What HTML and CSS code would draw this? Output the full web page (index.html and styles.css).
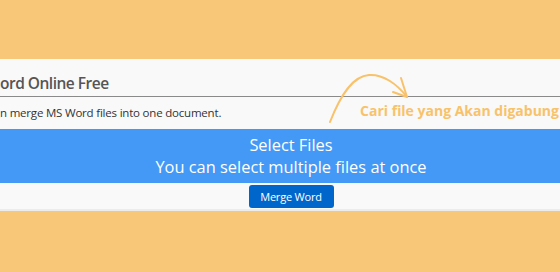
FILE: index.html
```html
<!DOCTYPE html>
<html>
<head>
<meta charset="utf-8">
<link rel="stylesheet" href="styles.css">
</head>
<body>
<div class="page">
  <div class="top-space"></div>
  <section class="panel">
    <h1 class="title">ord Online Free</h1>
    <p class="desc">n merge MS Word files into one document.</p>
    <div class="drop">
      <div class="drop-line">Select Files</div>
      <div class="drop-line">You can select multiple files at once</div>
    </div>
    <div class="actions">
      <button class="btn">Merge Word</button>
    </div>
  </section>
  <div class="bottom-space"></div>
  <div class="note">
    <svg class="arrow" width="90" height="60" viewBox="0 0 90 60">
      <path d="M3 58 C 14 30, 26 12, 42 11 C 56 10, 70 20, 80 33" fill="none" stroke="#f8c26a" stroke-width="2" stroke-linecap="round"/>
      <path d="M74 14 L 80 33 L 66 28" fill="none" stroke="#f8c26a" stroke-width="2" stroke-linecap="round" stroke-linejoin="round"/>
    </svg>
    <span class="note-text">Cari file yang Akan digabung</span>
  </div>
</div>
</body>
</html>
```
FILE: styles.css
```css
html, body {
  margin: 0;
  padding: 0;
}
body {
  background: #f8c778;
  font-family: "Open Sans", "Noto Sans", sans-serif;
  overflow: hidden;
}
.page {
  position: relative;
  width: 560px;
  height: 272px;
}
.top-space {
  height: 59px;
}
.panel {
  background: #f9f9f9;
  border-bottom: 2px solid #ececec;
  height: 150px;
  display: flex;
  flex-direction: column;
}
.title {
  margin: 0;
  height: 38px;
  box-sizing: border-box;
  padding-top: 13px;
  font-size: 15.5px;
  font-weight: 600;
  color: #555;
  line-height: 22px;
  border-bottom: 1px solid #8a8a8a;
  letter-spacing: -0.5px;
}
.desc {
  margin: 0;
  height: 32px;
  font-size: 11.5px;
  line-height: 32px;
  color: #333;
  letter-spacing: -0.2px;
}
.drop {
  background: #4399f5;
  color: #fff;
  height: 54px;
  padding-left: 22px;
  display: flex;
  flex-direction: column;
  align-items: center;
  justify-content: center;
  font-size: 16.4px;
  line-height: 22px;
}
.actions {
  display: flex;
  justify-content: center;
  padding-top: 2px;
  padding-left: 22px;
}
.btn {
  width: 85px;
  height: 23px;
  background: #0066cc;
  color: #fff;
  border: 0;
  border-radius: 3px;
  font-family: "Open Sans", sans-serif;
  font-size: 11px;
  letter-spacing: -0.2px;
  padding: 0;
}
.note {
  position: absolute;
  left: 327px;
  top: 64px;
}
.arrow {
  display: block;
}
.note-text {
  position: absolute;
  left: 33px;
  top: 37px;
  white-space: nowrap;
  font-size: 14px;
  font-weight: 700;
  color: #f8c26a;
}
```
